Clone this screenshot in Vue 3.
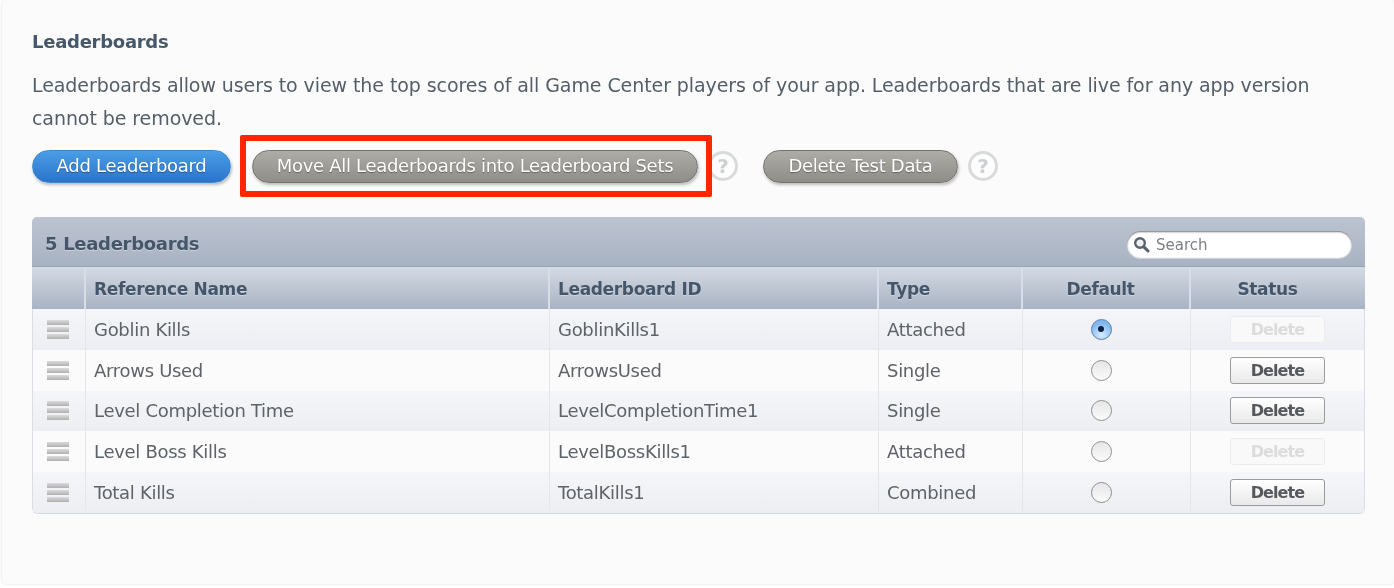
<script setup>
const rows = [
  { name: 'Goblin Kills', id: 'GoblinKills1', type: 'Attached', checked: true, disabled: true },
  { name: 'Arrows Used', id: 'ArrowsUsed', type: 'Single' },
  { name: 'Level Completion Time', id: 'LevelCompletionTime1', type: 'Single' },
  { name: 'Level Boss Kills', id: 'LevelBossKills1', type: 'Attached', disabled: true },
  { name: 'Total Kills', id: 'TotalKills1', type: 'Combined' },
]
</script>

<template>
  <div class="page">
    <section class="panel">
      <h2 class="title">Leaderboards</h2>
      <p class="intro">Leaderboards allow users to view the top scores of all Game Center players of your app. Leaderboards that are live for any app version cannot be removed.</p>
      <div class="actions">
        <button class="pill blue add">Add Leaderboard</button>
        <span class="highlighted">
          <button class="pill grey move">Move All Leaderboards into Leaderboard Sets</button>
          <span class="redbox"></span>
        </span>
        <span class="help">?</span>
        <button class="pill grey test">Delete Test Data</button>
        <span class="help">?</span>
      </div>
      <div class="table">
        <div class="toolbar">
          <span class="count">5 Leaderboards</span>
          <label class="search">
            <svg class="lens" width="17" height="17" viewBox="0 0 17 17">
              <circle cx="7" cy="7" r="4.8" fill="#eef0f2" stroke="#59626c" stroke-width="2.4"/>
              <path d="M10.6 10.6 15 15" stroke="#59626c" stroke-width="3" stroke-linecap="round"/>
            </svg>
            <span>Search</span>
          </label>
        </div>
        <div class="row head">
          <div class="cell"></div>
          <div class="cell">Reference Name</div>
          <div class="cell">Leaderboard ID</div>
          <div class="cell">Type</div>
          <div class="cell center col-default">Default</div>
          <div class="cell center col-status">Status</div>
        </div>
        <div v-for="r in rows" :key="r.name" class="row body">
          <div class="cell handle"><i></i><i></i><i></i></div>
          <div class="cell">{{ r.name }}</div>
          <div class="cell">{{ r.id }}</div>
          <div class="cell">{{ r.type }}</div>
          <div class="cell center col-default"><span class="radio" :class="{ on: r.checked }"></span></div>
          <div class="cell status"><button class="del" :class="{ off: r.disabled }">Delete</button></div>
        </div>
      </div>
    </section>
  </div>
</template>

<style>
html, body { margin: 0; background: #fff; overflow: hidden; }
</style>

<style scoped>
.page {
  width: 1394px;
  height: 588px;
  padding-left: 2px;
  box-sizing: border-box;
  font-family: "DejaVu Sans", sans-serif;
  overflow: hidden;
  filter: blur(.35px);
}
.panel {
  height: 584px;
  box-sizing: border-box;
  padding: 30px 29px 0 30px;
  background: #fbfbfc;
  border-radius: 4px;
  box-shadow: 0 0 3px rgba(0, 0, 0, .14);
}
.title {
  margin: 0;
  font-size: 18px;
  line-height: 24px;
  font-weight: 700;
  color: #46586a;
  letter-spacing: -.27px;
}
.intro {
  margin: 15px 0 0;
  font-size: 19px;
  line-height: 33px;
  letter-spacing: -.08px;
  color: #545e68;
}
.actions {
  display: flex;
  align-items: center;
  height: 34px;
  margin-top: 14px;
}
button { font-family: inherit; cursor: default; }
.pill {
  height: 33px;
  box-sizing: border-box;
  border-radius: 17px;
  color: #fff;
  font-size: 18px;
  padding: 0 0 2px;
  letter-spacing: -.3px;
  text-shadow: 0 1px 1px rgba(0, 0, 0, .35);
  box-shadow: 1px 2px 3px rgba(0, 0, 0, .25);
}
.blue {
  background: linear-gradient(#4a9ee6, #2b73cb);
  border: 1px solid #3d87c9;
}
.grey {
  background: linear-gradient(#aeaca6, #8f8d87);
  border: 1px solid #73726d;
}
.add { width: 199px; }
.highlighted { position: relative; display: flex; margin-left: 21px; }
.move { width: 446px; }
.redbox {
  position: absolute;
  left: -12px;
  top: -15px;
  width: 472px;
  height: 62px;
  box-sizing: border-box;
  border: 6px solid #ff2600;
  border-radius: 2px;
  pointer-events: none;
}
.help {
  width: 30px;
  height: 30px;
  margin-left: 10px;
  display: flex;
  align-items: center;
  justify-content: center;
  box-sizing: border-box;
  border: 3px solid #d8dadc;
  border-radius: 50%;
  color: #ccd0d3;
  font-weight: 700;
  font-size: 20px;
  background: #fdfdfd;
}
.test { width: 195px; margin-left: 25px; }
.table {
  width: 1333px;
  margin-top: 34px;
  border-radius: 5px 5px 6px 6px;
  overflow: hidden;
  border-bottom: 1px solid #d5dae2;
}
.toolbar {
  height: 46px;
  display: flex;
  align-items: center;
  justify-content: space-between;
  padding: 3px 13px 0 13px;
  background: linear-gradient(#bcc4d1, #a9b2c2);
  border-bottom: 1px solid #9aa3b1;
}
.count {
  font-weight: 700;
  font-size: 18px;
  letter-spacing: -.3px;
  color: #46566a;
  text-shadow: 0 1px 0 rgba(255, 255, 255, .35);
}
.search {
  width: 225px;
  height: 27px;
  margin-top: 2px;
  padding-top: 1px;
  box-sizing: border-box;
  display: flex;
  align-items: center;
  gap: 6px;
  padding-left: 6px;
  border-radius: 14px;
  background: #fff;
  box-shadow: inset 0 1px 2px rgba(0, 0, 0, .55), 0 1px 0 rgba(255, 255, 255, .4);
  color: #7c8086;
  font-size: 15px;
}
.row {
  display: grid;
  grid-template-columns: 54px 464px 329px 144px 168px 174px;
}
.head {
  height: 42px;
  background: linear-gradient(#d4dae3, #a9b3c4);
  font-weight: 700;
  font-size: 17px;
  letter-spacing: -.35px;
  color: #46566a;
  text-shadow: 0 1px 0 rgba(255, 255, 255, .3);
}
.body {
  height: 40.8px;
  font-size: 18px;
  letter-spacing: -.3px;
  color: #5d6369;
  box-shadow: inset 1px 0 #d9dde4, inset -1px 0 #d9dde4;
}
.body:nth-child(odd) { background: linear-gradient(#f5f6f9, #eceef2); }
.body:nth-child(even) { background: #fbfbfb; }
.cell {
  display: flex;
  align-items: center;
  padding-left: 8px;
  border-right: 1px solid #e3e6eb;
  min-width: 0;
}
.cell:last-child { border-right: 0; }
.head .cell { border-right: 2px solid #d9dee6; padding-top: 2px; }
.head .cell:last-child { border-right: 0; }
.center { justify-content: center; padding-left: 0; }
.col-default { padding-right: 11px; }
.col-status { padding-right: 21px; }
.handle {
  flex-direction: column;
  justify-content: center;
  gap: 2px;
  padding-left: 0;
  padding-right: 2px;
}
.handle i {
  display: block;
  width: 22px;
  height: 5px;
  background: linear-gradient(#dcdcdc, #b0b0b0);
}
.radio {
  width: 21px;
  height: 21px;
  box-sizing: border-box;
  border-radius: 50%;
  border: 1px solid #8d8f92;
  background: linear-gradient(#e6e6e6, #fbfbfb);
  position: relative;
}
.radio.on {
  border-color: #5b7fa8;
  background: radial-gradient(circle at 50% 80%, #d7ecff, #7fb7ee 70%);
}
.radio.on::after {
  content: "";
  position: absolute;
  left: 6.5px;
  top: 6.5px;
  width: 6px;
  height: 6px;
  border-radius: 50%;
  background: #0d2340;
}
.status { padding-left: 39px; }
.del {
  width: 95px;
  height: 27px;
  padding: 0;
  box-sizing: border-box;
  border: 1px solid #999b9d;
  border-radius: 3px;
  background: linear-gradient(#fff, #e9e9e9);
  color: #55595d;
  font-size: 16px;
  font-weight: 700;
  letter-spacing: -.9px;
}
.del.off {
  color: #dcdcdc;
  border-color: #ececec;
  background: #f9f9f9;
}
</style>
